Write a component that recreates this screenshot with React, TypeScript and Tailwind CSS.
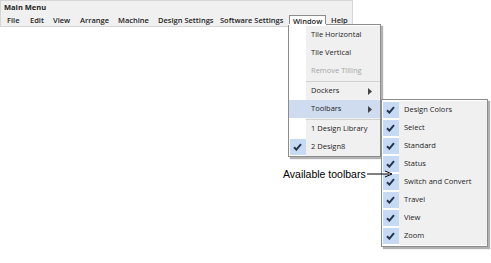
import React from "react";

const BAR = [
  { label: "File", w: "w-[23px]" },
  { label: "Edit", w: "w-[23px]" },
  { label: "View", w: "w-[27px]" },
  { label: "Arrange", w: "w-[38px]" },
  { label: "Machine", w: "w-[40px]" },
  { label: "Design Settings", w: "w-[62px]" },
  { label: "Software Settings", w: "w-[73px]" },
];

const TOOLBARS = [
  "Design Colors",
  "Select",
  "Standard",
  "Status",
  "Switch and Convert",
  "Travel",
  "View",
  "Zoom",
];

function Check() {
  return (
    <svg width="9" height="8" viewBox="0 0 9 8" className="block">
      <path d="M1 4.2 L3.4 6.6 L8 1.2" fill="none" stroke="#24344f" strokeWidth="2" />
    </svg>
  );
}

function Arrow() {
  return (
    <svg width="4" height="7" viewBox="0 0 4 7" className="block">
      <path d="M0 0 L4 3.5 L0 7 Z" fill="#444" />
    </svg>
  );
}

function Row({
  label,
  checked,
  disabled,
  sub,
  active,
}: {
  label: string;
  checked?: boolean;
  disabled?: boolean;
  sub?: boolean;
  active?: boolean;
}) {
  return (
    <div className={`flex h-[18px] items-center ${active ? "bg-[#cfdcf0]" : ""}`}>
      <div className="flex h-[16px] w-[17px] items-center justify-center">
        {checked && (
          <div className="flex h-[16px] w-[16px] items-center justify-center bg-[#c6daf3]">
            <Check />
          </div>
        )}
      </div>
      <div
        className={`flex h-full flex-1 items-center pl-[5px] pr-[8px] ${
          active ? "" : "bg-[#f0f0f0]"
        } ${disabled ? "text-[#a6a6a6]" : "text-[#1e1e1e]"}`}
      >
        <span className="flex-1">{label}</span>
        {sub && <Arrow />}
      </div>
    </div>
  );
}

function Sep() {
  return (
    <div className="flex h-[2px]">
      <div className="w-[17px]" />
      <div className="flex flex-1 items-center bg-[#f0f0f0]">
        <div className="h-px w-full bg-[#d2d2d2]" />
      </div>
    </div>
  );
}

export default function App() {
  return (
    <div
      className="relative h-[263px] w-[491px] overflow-hidden bg-white text-[7.5px] leading-none"
      style={{ fontFamily: '"Open Sans", "Noto Sans", sans-serif' }}
    >
      <div className="h-[27px] w-[353px] border border-[#d6d6d6] bg-[#f0f0f0]">
        <div className="pl-[3px] pt-[3px] font-bold text-[#1e1e1e]">Main Menu</div>
        <div className="mt-[3px] flex h-[13px] items-center pl-[2px] font-semibold text-[#1e1e1e]">
          {BAR.map((b) => (
            <div key={b.label} className={`${b.w} pl-[4px]`}>
              {b.label}
            </div>
          ))}
          <div className="flex h-[13px] w-[37px] items-center border border-b-0 border-[#8c8c8c] bg-white pl-[3px]">
            Window
          </div>
          <div className="pl-[5px]">Help</div>
        </div>
      </div>

      {/* Window dropdown */}
      <div className="absolute left-[288px] top-[24px] w-[93px] border border-[#8c8c8c] bg-white shadow-[2px_2px_1px_rgba(0,0,0,0.3)]">
        <div className="absolute left-[-1px] top-[-1px] h-px w-[38px] bg-white" />
        <div className="pt-[1px]">
          <Row label="Tile Horizontal" />
          <Row label="Tile Vertical" />
          <Row label="Remove Tilling" disabled />
          <Sep />
          <Row label="Dockers" sub />
          <Row label="Toolbars" sub active />
          <Sep />
          <Row label="1 Design Library" />
          <Row label="2 Design8" checked />
        </div>
      </div>

      {/* Toolbars submenu */}
      <div className="absolute left-[381px] top-[99px] w-[107px] border border-[#8c8c8c] bg-white shadow-[2px_2px_1px_rgba(0,0,0,0.3)]">
        <div className="pb-[1px] pt-[1px]">
          {TOOLBARS.map((t) => (
            <div key={t} className="flex h-[18px] items-center">
              <div className="flex w-[17px] justify-center">
                <div className="flex h-[16px] w-[16px] items-center justify-center bg-[#c6daf3]">
                  <Check />
                </div>
              </div>
              <div className="flex h-full flex-1 items-center bg-[#f0f0f0] pl-[5px] text-[#1e1e1e]">
                {t}
              </div>
            </div>
          ))}
        </div>
      </div>

      {/* Annotation */}
      <div
        className="absolute left-[283px] top-[169px] flex items-center text-[10.5px] text-black"
        style={{ fontFamily: '"Liberation Sans", Arial, sans-serif' }}
      >
        <span>Available toolbars</span>
        <svg width="26" height="8" viewBox="0 0 26 8" className="ml-[1px] block">
          <line x1="0" y1="4" x2="22" y2="4" stroke="#000" strokeWidth="1" />
          <path d="M18 1 L25 4 L18 7" fill="none" stroke="#000" strokeWidth="1" />
        </svg>
      </div>
    </div>
  );
}
